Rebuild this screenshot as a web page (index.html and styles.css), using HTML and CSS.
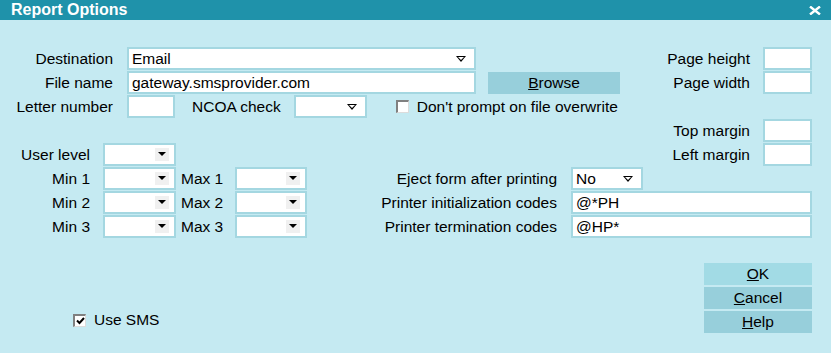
FILE: index.html
```html
<!DOCTYPE html>
<html lang="en">
<head>
  <meta charset="UTF-8" />
  <title>Report Options</title>
  <link rel="stylesheet" href="styles.css">
</head>
<body>
  <div class="dialog">
    <div class="titlebar">
      <span class="title">Report Options</span>
      <svg class="close" width="12" height="9" viewBox="0 0 12 9">
        <path d="M1 0.5 L11 8.5 M11 0.5 L1 8.5" stroke="#fff" stroke-width="2.4" fill="none" />
      </svg>
    </div>

    <div class="content">
      <!-- top rows -->
      <div class="row">
        <label class="lbl">Destination</label>
        <div class="field combo w-wide">Email<span class="hollow"></span></div>
        <div class="spacer"></div>
        <label class="rlbl">Page height</label>
        <div class="field w-small"></div>
      </div>
      <div class="row">
        <label class="lbl">File name</label>
        <div class="field w-wide">gateway.smsprovider.com</div>
        <button class="btn browse"><u>B</u>rowse</button>
        <div class="spacer"></div>
        <label class="rlbl">Page width</label>
        <div class="field w-small"></div>
      </div>
      <div class="row">
        <label class="lbl">Letter number</label>
        <div class="field w-letter"></div>
        <label class="ncoa-lbl">NCOA check</label>
        <div class="field combo w-ncoa"><span class="hollow"></span></div>
        <span class="check"></span>
        <span class="check-text">Don't prompt on file overwrite</span>
      </div>
      <div class="row">
        <div class="spacer"></div>
        <label class="rlbl">Top margin</label>
        <div class="field w-small"></div>
      </div>
      <div class="row">
        <label class="lbl short">User level</label>
        <div class="field combo w-drop"><span class="dropbtn"></span></div>
        <div class="spacer"></div>
        <label class="rlbl">Left margin</label>
        <div class="field w-small"></div>
      </div>
      <div class="row">
        <label class="lbl short">Min 1</label>
        <div class="field combo w-drop"><span class="dropbtn"></span></div>
        <label class="max-lbl">Max 1</label>
        <div class="field combo w-max"><span class="dropbtn"></span></div>
        <label class="plbl">Eject form after printing</label>
        <div class="field combo w-eject">No<span class="hollow"></span></div>
      </div>
      <div class="row">
        <label class="lbl short">Min 2</label>
        <div class="field combo w-drop"><span class="dropbtn"></span></div>
        <label class="max-lbl">Max 2</label>
        <div class="field combo w-max"><span class="dropbtn"></span></div>
        <label class="plbl">Printer initialization codes</label>
        <div class="field w-codes">@*PH</div>
      </div>
      <div class="row">
        <label class="lbl short">Min 3</label>
        <div class="field combo w-drop"><span class="dropbtn"></span></div>
        <label class="max-lbl">Max 3</label>
        <div class="field combo w-max"><span class="dropbtn"></span></div>
        <label class="plbl">Printer termination codes</label>
        <div class="field w-codes">@HP*</div>
      </div>

      <!-- bottom -->
      <div class="bottom">
        <div class="sms">
          <span class="check checked">
            <svg width="9" height="8" viewBox="0 0 9 8">
              <path d="M1 3.5 L3.5 6 L8 1" stroke="#000" stroke-width="2" fill="none" />
            </svg>
          </span>
          <span class="check-text">Use SMS</span>
        </div>
        <div class="buttons">
          <button class="btn ok"><u>O</u>K</button>
          <button class="btn"><u>C</u>ancel</button>
          <button class="btn"><u>H</u>elp</button>
        </div>
      </div>
    </div>
  </div>
</body>
</html>
```

FILE: styles.css
```css
* {
  box-sizing: border-box;
  margin: 0;
  padding: 0;
}

body {
  background: #c5eaf2;
  font-family: 'Liberation Sans', Arial, sans-serif;
  font-size: 15.5px;
  color: #000;
  width: 831px;
  height: 353px;
  overflow: hidden;
}

.titlebar {
  height: 20px;
  background: #1f92aa;
  color: #fff;
  display: flex;
  align-items: center;
  justify-content: space-between;
  padding: 0 10px 0 11px;
}

.title {
  font-size: 16px;
  font-weight: bold;
  line-height: 20px;
}

.close {
  margin-top: 1px;
}

.content {
  padding-top: 27px;
}

.row {
  display: flex;
  align-items: center;
  height: 23px;
  margin-bottom: 1px;
  padding-right: 19px;
}

.row label {
  white-space: nowrap;
}

.spacer {
  flex: 1;
}

.lbl {
  width: 113px;
  margin-right: 14px;
  text-align: right;
}

.lbl.short {
  width: 90px;
  margin-right: 13px;
}

.rlbl {
  margin-right: 13px;
}

.ncoa-lbl {
  margin-left: 17px;
  margin-right: 13px;
}

.max-lbl {
  width: 40px;
  margin-left: 5px;
  margin-right: 14px;
}

.plbl {
  width: 250px;
  margin-right: 14px;
  text-align: right;
}

.field {
  height: 23px;
  background: #fff;
  border: 2px solid #a4d7e1;
  padding-left: 3px;
  line-height: 19px;
  position: relative;
  white-space: nowrap;
}

.w-wide { width: 349px; }
.w-small { width: 49px; }
.w-letter { width: 48px; }
.w-ncoa { width: 73px; }
.w-drop { width: 73px; }
.w-max { width: 72px; }
.w-eject { width: 72px; }
.w-codes { width: 241px; }

/* outlined arrow used on text combos */
.hollow {
  position: absolute;
  right: 8px;
  top: 7px;
  width: 10px;
  height: 6px;
}

.hollow::before {
  content: '';
  position: absolute;
  left: 0;
  top: 0;
  border-left: 5px solid transparent;
  border-right: 5px solid transparent;
  border-top: 6px solid #000;
}

.hollow::after {
  content: '';
  position: absolute;
  left: 2px;
  top: 1px;
  border-left: 3px solid transparent;
  border-right: 3px solid transparent;
  border-top: 3.5px solid #fff;
}

/* grey button with filled arrow */
.dropbtn {
  position: absolute;
  right: 5px;
  top: 3px;
  width: 14px;
  height: 13px;
  background: #f0f0f0;
}

.dropbtn::after {
  content: '';
  position: absolute;
  left: 3px;
  top: 4px;
  border-left: 4px solid transparent;
  border-right: 4px solid transparent;
  border-top: 4px solid #000;
}

.btn {
  border: none;
  background: #97cfdb;
  font-family: inherit;
  font-size: 15.5px;
  color: #000;
  height: 22px;
  line-height: 22px;
}

.browse {
  width: 132px;
  margin-left: 12px;
  margin-top: 1px;
}

.check {
  width: 13px;
  height: 13px;
  margin-left: 29px;
  background: #fff;
  border-top: 2px solid #808080;
  border-left: 2px solid #808080;
  border-right: 1px solid #dcdcdc;
  border-bottom: 1px solid #dcdcdc;
  display: inline-flex;
  align-items: center;
  justify-content: center;
}

.check-text {
  margin-left: 8px;
  white-space: nowrap;
}

.bottom {
  display: flex;
  justify-content: space-between;
  align-items: flex-end;
  margin-top: 25px;
  padding-right: 19px;
}

.sms {
  display: flex;
  align-items: center;
  margin-left: 44px;
  margin-bottom: 4px;
}

.buttons {
  display: flex;
  flex-direction: column;
  gap: 2px;
  width: 108px;
}

.buttons .ok {
  background: #a2dbe5;
}
```
